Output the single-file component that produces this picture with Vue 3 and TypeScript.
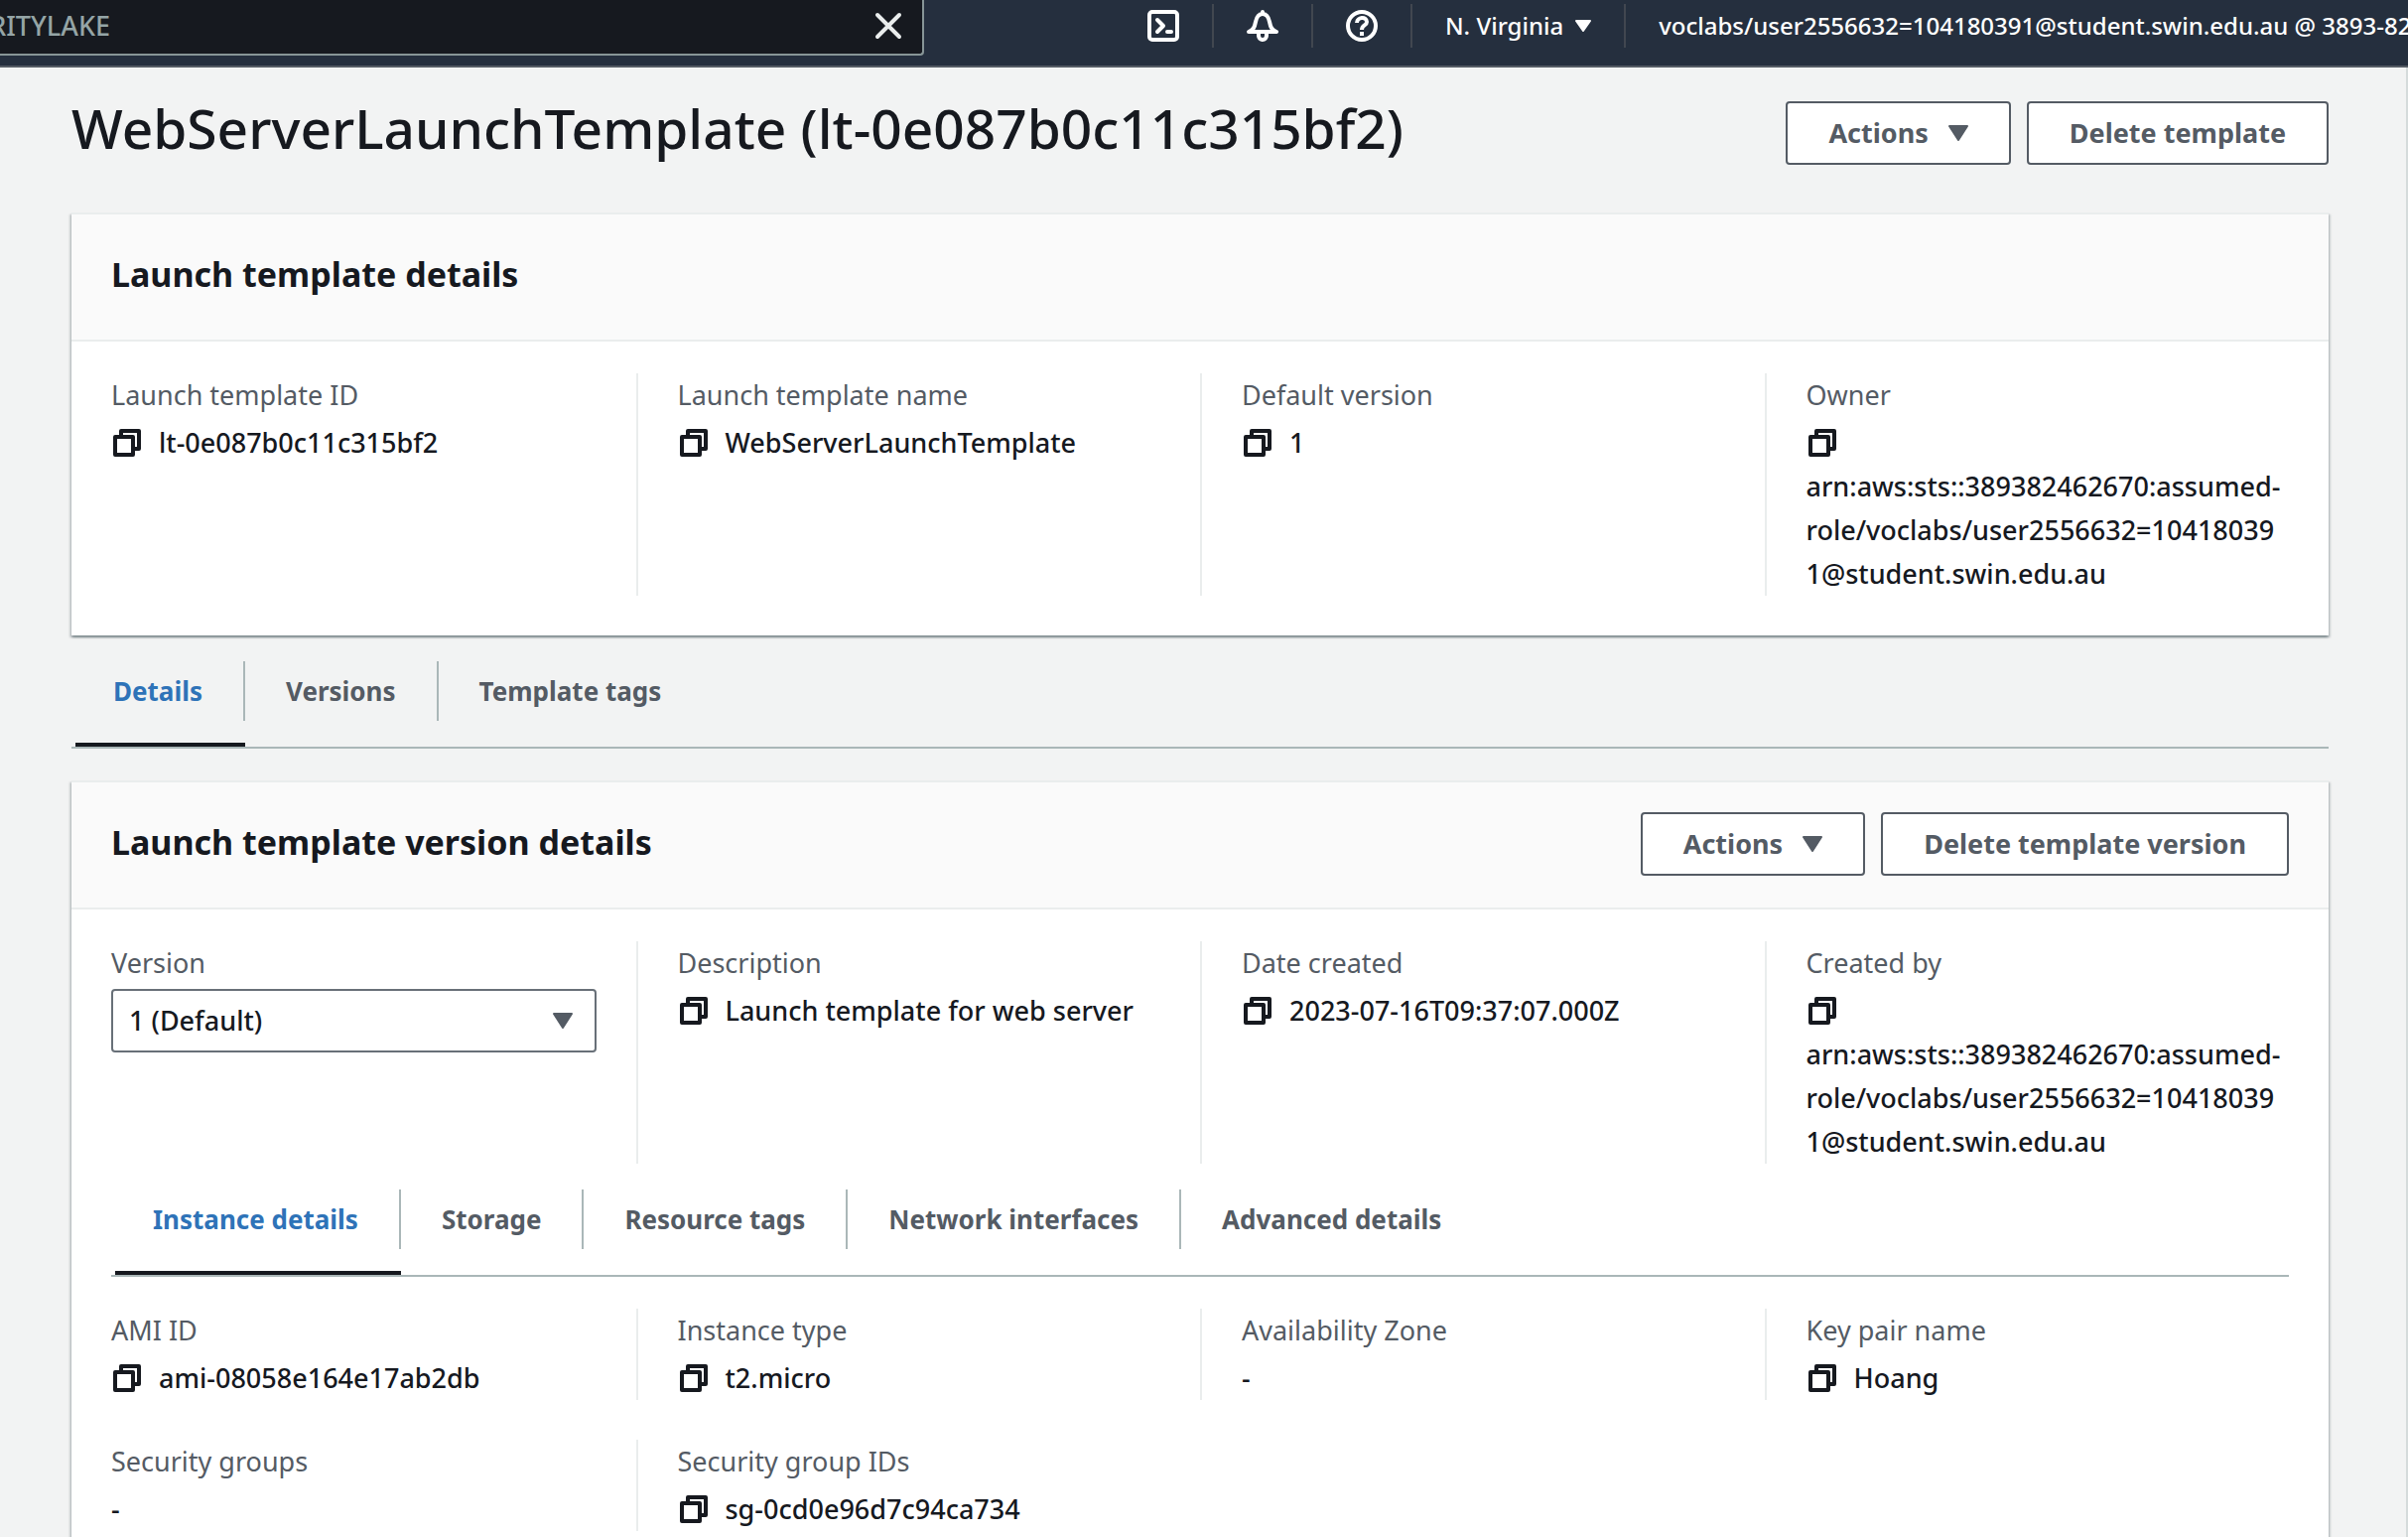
<script setup lang="ts">
import { h, ref, type FunctionalComponent } from 'vue'

interface Field {
  label: string
  lines: string[]
  copy: boolean
  select?: boolean
}

const owner = [
  '',
  'arn:aws:sts::389382462670:assumed-',
  'role/voclabs/user2556632=10418039',
  '1@student.swin.edu.au',
]

const templateFields: Field[] = [
  { label: 'Launch template ID', lines: ['lt-0e087b0c11c315bf2'], copy: true },
  { label: 'Launch template name', lines: ['WebServerLaunchTemplate'], copy: true },
  { label: 'Default version', lines: ['1'], copy: true },
  { label: 'Owner', lines: owner, copy: true },
]

const versionFields: Field[] = [
  { label: 'Version', lines: [], copy: false, select: true },
  { label: 'Description', lines: ['Launch template for web server'], copy: true },
  { label: 'Date created', lines: ['2023-07-16T09:37:07.000Z'], copy: true },
  { label: 'Created by', lines: owner, copy: true },
]

const instanceRows: Field[][] = [
  [
    { label: 'AMI ID', lines: ['ami-08058e164e17ab2db'], copy: true },
    { label: 'Instance type', lines: ['t2.micro'], copy: true },
    { label: 'Availability Zone', lines: ['-'], copy: false },
    { label: 'Key pair name', lines: ['Hoang'], copy: true },
  ],
  [
    { label: 'Security groups', lines: ['-'], copy: false },
    { label: 'Security group IDs', lines: ['sg-0cd0e96d7c94ca734'], copy: true },
  ],
]

const pageTabs = ['Details', 'Versions', 'Template tags']
const versionTabs = ['Instance details', 'Storage', 'Resource tags', 'Network interfaces', 'Advanced details']
const pageTab = ref('Details')
const versionTab = ref('Instance details')
const version = ref('1')

const CopyIcon: FunctionalComponent = () =>
  h(
    'svg',
    { width: 32, height: 32, viewBox: '0 0 32 32', fill: 'none', stroke: 'currentColor', 'stroke-width': 4, 'stroke-linejoin': 'round' },
    [
      h('path', { d: 'M4 10h18v18H4z' }),
      h('path', { d: 'M10 8V4h18v18h-4' }),
    ],
  )

const Caret: FunctionalComponent = () =>
  h(
    'svg',
    { width: 20, height: 16, viewBox: '0 0 20 16', fill: 'currentColor', stroke: 'currentColor', 'stroke-width': 2, 'stroke-linejoin': 'round' },
    [h('path', { d: 'M1 1h18l-9 14z' })],
  )
</script>

<template>
  <div class="app">
    <header class="topbar">
      <div class="search">
        <span class="query">SECURITYLAKE</span>
        <button class="plain clear" aria-label="Clear search">
          <svg width="32" height="32" viewBox="0 0 32 32" fill="none" stroke="currentColor" stroke-width="4" stroke-linecap="round">
            <path d="M5 5l22 22M27 5L5 27" />
          </svg>
        </button>
      </div>
      <nav class="tools" aria-label="Account">
        <button class="plain tool" aria-label="CloudShell">
          <svg width="32" height="32" viewBox="0 0 32 32" fill="none" stroke="currentColor" stroke-width="4" stroke-linejoin="round" stroke-linecap="round">
            <rect x="2" y="2" width="28" height="28" rx="3" />
            <path d="M10 10l6 6-6 6M20 22h4" />
          </svg>
        </button>
        <button class="plain tool" aria-label="Notifications">
          <svg width="32" height="32" viewBox="0 0 32 32" fill="none" stroke="currentColor" stroke-width="4" stroke-linejoin="round" stroke-linecap="round">
            <path d="M16 2v2M2 22c5-2 6-5 7-10s3-8 7-8 6 3 7 8 2 8 7 10z" />
            <path d="M12 23v3a4 4 0 0 0 8 0v-3" />
          </svg>
        </button>
        <button class="plain tool" aria-label="Help">
          <svg width="32" height="32" viewBox="0 0 32 32" fill="none" stroke="currentColor" stroke-width="4">
            <circle cx="16" cy="16" r="14" />
            <path d="M11 13c0-6 10-7 10-1 0 4-5 3-5 8" />
            <path d="M14 24h4" />
          </svg>
        </button>
        <button class="plain tool region">
          N. Virginia
          <svg width="16" height="12" viewBox="0 0 16 12" fill="currentColor" stroke="currentColor" stroke-width="2" stroke-linejoin="round">
            <path d="M1 1h14l-7 10z" />
          </svg>
        </button>
        <button class="plain tool account">voclabs/user2556632=104180391@student.swin.edu.au @ 3893-8246-2670</button>
      </nav>
    </header>

    <main class="content">
      <div class="title-row">
        <h1>WebServerLaunchTemplate (lt-0e087b0c11c315bf2)</h1>
        <div class="actions">
          <button class="btn">Actions <Caret /></button>
          <button class="btn">Delete template</button>
        </div>
      </div>

      <section class="card">
        <div class="card-head">
          <h2>Launch template details</h2>
        </div>
        <dl class="fields">
          <div v-for="f in templateFields" :key="f.label" class="field">
            <dt>{{ f.label }}</dt>
            <dd>
              <button v-if="f.copy" class="plain copy" :aria-label="`Copy ${f.label}`"><CopyIcon /></button>
              <template v-for="(line, i) in f.lines" :key="i"><br v-if="i > 0" />{{ line }}</template>
            </dd>
          </div>
        </dl>
      </section>

      <div class="tabs" role="tablist">
        <button
          v-for="t in pageTabs"
          :key="t"
          class="plain tab"
          :class="{ active: t === pageTab }"
          role="tab"
          :aria-selected="t === pageTab"
          @click="pageTab = t"
        >
          <span>{{ t }}</span>
        </button>
      </div>

      <section class="card second">
        <div class="card-head">
          <h2>Launch template version details</h2>
          <div class="actions">
            <button class="btn">Actions <Caret /></button>
            <button class="btn">Delete template version</button>
          </div>
        </div>
        <dl class="fields">
          <div v-for="f in versionFields" :key="f.label" class="field">
            <dt>
              <label v-if="f.select" for="version">{{ f.label }}</label>
              <template v-else>{{ f.label }}</template>
            </dt>
            <dd v-if="f.select" class="picker">
              <select id="version" v-model="version">
                <option value="1">1 (Default)</option>
              </select>
              <Caret class="picker-caret" />
            </dd>
            <dd v-else>
              <button v-if="f.copy" class="plain copy" :aria-label="`Copy ${f.label}`"><CopyIcon /></button>
              <template v-for="(line, i) in f.lines" :key="i"><br v-if="i > 0" />{{ line }}</template>
            </dd>
          </div>
        </dl>

        <div class="tabs inner" role="tablist">
          <button
            v-for="t in versionTabs"
            :key="t"
            class="plain tab"
            :class="{ active: t === versionTab }"
            role="tab"
            :aria-selected="t === versionTab"
            @click="versionTab = t"
          >
            <span>{{ t }}</span>
          </button>
        </div>

        <div class="instance">
          <dl v-for="(row, r) in instanceRows" :key="r" class="fields">
            <div v-for="f in row" :key="f.label" class="field">
              <dt>{{ f.label }}</dt>
              <dd>
                <button v-if="f.copy" class="plain copy" :aria-label="`Copy ${f.label}`"><CopyIcon /></button>
                <template v-for="(line, i) in f.lines" :key="i">{{ line }}</template>
              </dd>
            </div>
          </dl>
        </div>
      </section>
    </main>
  </div>
</template>

<style>
body {
  margin: 0;
  background: #f2f3f3;
}
</style>

<style scoped>
.app {
  display: flex;
  flex-direction: column;
  height: 100vh;
  overflow: hidden;
  box-sizing: border-box;
  background: #f2f3f3;
  color: #16191f;
  font-family: 'Noto Sans', 'Open Sans', sans-serif;
  font-size: 27px;
  line-height: 44px;
}
.plain {
  padding: 0;
  border: 0;
  background: none;
  color: inherit;
  font: inherit;
  cursor: pointer;
}
svg {
  display: block;
  flex: none;
}

.topbar {
  display: flex;
  justify-content: space-between;
  flex: none;
  border-bottom: 2px solid #545b64;
  background: #252f3e;
  color: #fff;
}
.search {
  display: flex;
  align-items: center;
  justify-content: space-between;
  box-sizing: border-box;
  width: 931px;
  height: 56px;
  padding: 0 18px 2px 0;
  border: solid #879596;
  border-width: 0 2px 2px 0;
  border-radius: 0 0 4px 0;
  background: #16191f;
  overflow: hidden;
}
.query {
  display: flex;
  justify-content: flex-end;
  width: 111px;
  color: #95a5a6;
  font-weight: 500;
}
.clear {
  color: #eaeded;
}
.tools {
  display: flex;
  flex: none;
  align-items: flex-start;
  width: 1303px;
  height: 66px;
  overflow: hidden;
}
.tool {
  display: flex;
  align-items: center;
  flex: none;
  height: 44px;
  margin-top: 4px;
  padding: 0 33px;
  border-right: 2px solid #414750;
  font-size: 24px;
  font-weight: 500;
  white-space: nowrap;
}
.region {
  gap: 12px;
}
.account {
  border-right: 0;
}

.content {
  flex: 1;
  min-height: 0;
  padding: 34px 78px 0 72px;
  border-right: 2px solid #d5dbdb;
}
.title-row {
  display: flex;
  align-items: flex-start;
  justify-content: space-between;
  height: 112px;
}
h1,
h2 {
  margin: 0;
}
h1 {
  font-size: 55px;
  font-weight: 500;
  line-height: 54px;
}
h2 {
  font-size: 34px;
  line-height: 44px;
}
.actions {
  display: flex;
  gap: 16px;
}
.btn {
  display: flex;
  align-items: center;
  gap: 20px;
  box-sizing: border-box;
  height: 64px;
  padding: 0 41px;
  border: 2px solid #545b64;
  border-radius: 4px;
  background: #fff;
  color: #545b64;
  font: inherit;
  font-weight: 700;
  white-space: nowrap;
}

.card {
  border-top: 2px solid #eaeded;
  background: #fff;
  box-shadow:
    0 2px 2px 0 rgba(0, 28, 36, 0.3),
    2px 2px 2px 0 rgba(0, 28, 36, 0.15),
    -2px 2px 2px 0 rgba(0, 28, 36, 0.15);
}
.card-head {
  display: flex;
  align-items: center;
  justify-content: space-between;
  box-sizing: border-box;
  height: 128px;
  padding: 0 40px 2px;
  border-bottom: 2px solid #eaeded;
  background: #fafafa;
}
.card-head h2 {
  padding-bottom: 4px;
}
.second {
  margin-top: 32px;
}
.fields {
  display: grid;
  grid-template-columns: repeat(4, 1fr);
  margin: 0;
  padding: 32px 0 40px;
}
.field {
  min-width: 0;
  padding: 0 40px;
}
.field + .field {
  border-left: 2px solid #eaeded;
}
dt {
  color: #545b64;
}
dd {
  margin: 4px 0 0;
  font-weight: 500;
  white-space: nowrap;
}
.copy {
  display: inline-flex;
  align-items: center;
  height: 44px;
  margin-right: 16px;
  vertical-align: top;
}
.picker {
  display: grid;
  align-items: center;
}
select {
  grid-area: 1 / 1;
  box-sizing: border-box;
  width: 100%;
  height: 64px;
  padding: 0 16px;
  border: 2px solid #687078;
  border-radius: 4px;
  appearance: none;
  background: #fff;
  color: inherit;
  font: inherit;
}
.picker-caret {
  grid-area: 1 / 1;
  justify-self: end;
  margin-right: 24px;
  color: #545b64;
  pointer-events: none;
}

.tabs {
  display: flex;
  padding: 26px 4px 0;
  border-bottom: 2px solid #aab7b8;
  color: #545b64;
}
.inner {
  margin: 0 40px;
}
.second > .fields {
  padding-bottom: 0;
}
.tab {
  padding-bottom: 22px;
  border-bottom: 4px solid transparent;
  font-size: 26px;
  font-weight: 700;
}
.tab span {
  display: block;
  padding: 8px 41px;
  border-right: 2px solid #aab7b8;
}
.tab:first-child span {
  padding-left: 38px;
}
.tab:last-child span {
  border-right-color: transparent;
}
.tab.active {
  border-bottom-color: #16191f;
  color: #2e73b8;
}
.instance .fields + .fields {
  padding-top: 0;
}
</style>
